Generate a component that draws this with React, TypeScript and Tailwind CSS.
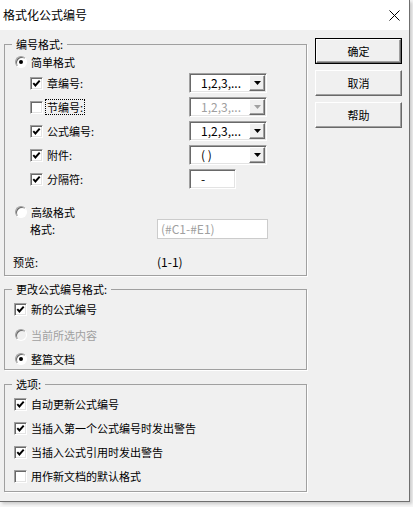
import React from "react";

const sunken =
  "border border-t-[#a0a0a0] border-l-[#a0a0a0] border-r-white border-b-white shadow-[inset_1px_1px_0_#696969,inset_-1px_-1px_0_#e3e3e3]";
const raised =
  "border border-t-white border-l-white border-r-[#696969] border-b-[#696969] shadow-[inset_-1px_-1px_0_#a0a0a0]";

function Check({ on }: { on: boolean }) {
  return (
    <span className={`flex h-[13px] w-[13px] shrink-0 items-center justify-center bg-white ${sunken}`}>
      {on && (
        <svg width="9" height="9" viewBox="0 0 9 9">
          <path d="M1.3 4.2 L3.4 6.5 L7.7 1.6" fill="none" stroke="#000" strokeWidth="1.9" />
        </svg>
      )}
    </span>
  );
}

function Radio({ on, disabled }: { on: boolean; disabled?: boolean }) {
  return (
    <span
      className={`flex h-[12px] w-[12px] shrink-0 items-center justify-center rounded-full border border-t-[#a0a0a0] border-l-[#a0a0a0] border-r-white border-b-white ${
        disabled ? "bg-[#f0f0f0]" : "bg-white"
      } shadow-[inset_1px_1px_0_#696969]`}
    >
      {on && <span className="h-[4px] w-[4px] rounded-full bg-black" />}
    </span>
  );
}

function Combo({ value, disabled }: { value: string; disabled?: boolean }) {
  const c = disabled ? "#a0a0a0" : "#000";
  return (
    <div className={`flex h-[20px] w-[78px] bg-white p-[1px] ${sunken}`}>
      <span className={`flex-1 pl-[10px] text-[12px] leading-[16px] ${disabled ? "text-[#a0a0a0]" : "text-black"}`}>
        {value}
      </span>
      <span className={`flex h-[16px] w-[16px] items-center justify-center bg-[#f0f0f0] ${raised}`}>
        <svg width="7" height="4" viewBox="0 0 7 4">
          <path d="M0 0 H7 L3.5 4 Z" fill={c} />
        </svg>
      </span>
    </div>
  );
}

function Label({ text, focus, disabled }: { text: string; focus?: boolean; disabled?: boolean }) {
  return (
    <span
      className={`ml-[2px] border px-[1px] leading-[14px] ${focus ? "border-dotted border-black" : "border-transparent"} ${
        disabled ? "text-[#a0a0a0]" : "text-black"
      }`}
    >
      {text}
    </span>
  );
}

function Btn({ label, primary }: { label: string; primary?: boolean }) {
  const inner = (
    <div className={`flex items-center justify-center bg-[#f0f0f0] text-[11px] ${raised} ${primary ? "h-[24px]" : "h-[26px]"}`}>
      {label}
    </div>
  );
  return primary ? <div className="w-[87px] border border-black">{inner}</div> : <div className="w-[87px]">{inner}</div>;
}

const numRows = [
  { label: "章编号:", on: true, combo: "1,2,3,..." },
  { label: "节编号:", on: false, combo: "1,2,3,...", disabled: true, focus: true },
  { label: "公式编号:", on: true, combo: "1,2,3,..." },
  { label: "附件:", on: true, combo: "( )" },
];

const options = [
  { label: "自动更新公式编号", on: true },
  { label: "当插入第一个公式编号时发出警告", on: true },
  { label: "当插入公式引用时发出警告", on: true },
  { label: "用作新文档的默认格式", on: false },
];

const groupCls = "w-[303px] border border-[#a0a0a0] shadow-[1px_1px_0_#fff]";
const legendCls = "ml-[7px] px-[4px] text-[11px] leading-[14px]";

export default function App() {
  return (
    <div className="h-[507px] w-[413px] overflow-hidden bg-[#f6f6f6] font-['Noto_Sans_CJK_SC','Microsoft_YaHei',sans-serif] text-black">
      <div className="flex h-[502px] w-[410px] flex-col border-r border-b border-[#6f6f6f] bg-[#f0f0f0] shadow-[2px_2px_3px_rgba(0,0,0,0.18)]">
        <div className="flex h-[30px] shrink-0 items-center justify-between bg-white pl-[3px] pr-[9px]">
          <span className="text-[12px] leading-[16px]">格式化公式编号</span>
          <svg width="11" height="11" viewBox="0 0 11 11">
            <path d="M0.5 0.5 L10.5 10.5 M10.5 0.5 L0.5 10.5" stroke="#000" strokeWidth="1" />
          </svg>
        </div>

        <div className="flex items-start pl-[4px]">
          <div className="flex flex-col pt-[7px]">
            <fieldset className={`${groupCls} h-[239px]`}>
              <legend className={legendCls}>编号格式:</legend>
              <div className="flex h-[22px] items-center gap-[4px] pl-[10px] text-[11px]">
                <Radio on />
                <span className="leading-[14px]">简单格式</span>
              </div>
              <div className="flex flex-col gap-[4px]">
                {numRows.map((r) => (
                  <div key={r.label} className="flex h-[20px] items-center pl-[25px] text-[11px]">
                    <div className="flex w-[159px] items-center">
                      <Check on={r.on} />
                      <Label text={r.label} focus={r.focus} />
                    </div>
                    <Combo value={r.combo} disabled={r.disabled} />
                  </div>
                ))}
                <div className="flex h-[20px] items-center pl-[25px] text-[11px]">
                  <div className="flex w-[159px] items-center">
                    <Check on />
                    <Label text="分隔符:" />
                  </div>
                  <div className={`h-[20px] w-[47px] bg-white pl-[11px] text-[12px] leading-[18px] ${sunken}`}>-</div>
                </div>
              </div>
              <div className="mt-[16px] flex h-[14px] items-center gap-[4px] pl-[10px] text-[11px]">
                <Radio on={false} />
                <span className="leading-[14px]">高级格式</span>
              </div>
              <div className="flex h-[20px] items-center pl-[25px] text-[11px]">
                <span className="w-[127px] leading-[14px]">格式:</span>
                <div className="h-[20px] w-[111px] border border-[#cccccc] bg-white pl-[3px] text-[12px] leading-[18px] text-[#a0a0a0]">
                  (#C1-#E1)
                </div>
              </div>
              <div className="mt-[13px] flex h-[20px] items-center pl-[8px] text-[11px]">
                <span className="w-[144px] leading-[14px]">预览:</span>
                <span className="text-[12px] leading-[16px]">(1-1)</span>
              </div>
            </fieldset>

            <fieldset className={`${groupCls} mt-[6px] h-[88px]`}>
              <legend className={legendCls}>更改公式编号格式:</legend>
              <div className="flex h-[26px] items-center gap-[4px] pl-[9px] text-[11px]">
                <Check on />
                <span className="leading-[14px]">新的公式编号</span>
              </div>
              <div className="flex h-[26px] items-center gap-[4px] pl-[10px] text-[11px]">
                <Radio on={false} disabled />
                <span className="leading-[14px] text-[#a0a0a0]">当前所选内容</span>
              </div>
              <div className="flex h-[21px] items-center gap-[4px] pl-[10px] text-[11px]">
                <Radio on />
                <span className="leading-[14px]">整篇文档</span>
              </div>
            </fieldset>

            <fieldset className={`${groupCls} mt-[7px] h-[115px]`}>
              <legend className={legendCls}>选项:</legend>
              <div className="pt-[1px]">
                {options.map((o) => (
                  <div key={o.label} className="flex h-[24px] items-center gap-[4px] pl-[9px] text-[11px]">
                    <Check on={o.on} />
                    <span className="leading-[14px]">{o.label}</span>
                  </div>
                ))}
              </div>
            </fieldset>
          </div>

          <div className="ml-[8px] flex flex-col gap-[6px] pt-[8px]">
            <Btn label="确定" primary />
            <Btn label="取消" />
            <Btn label="帮助" />
          </div>
        </div>
      </div>
    </div>
  );
}
